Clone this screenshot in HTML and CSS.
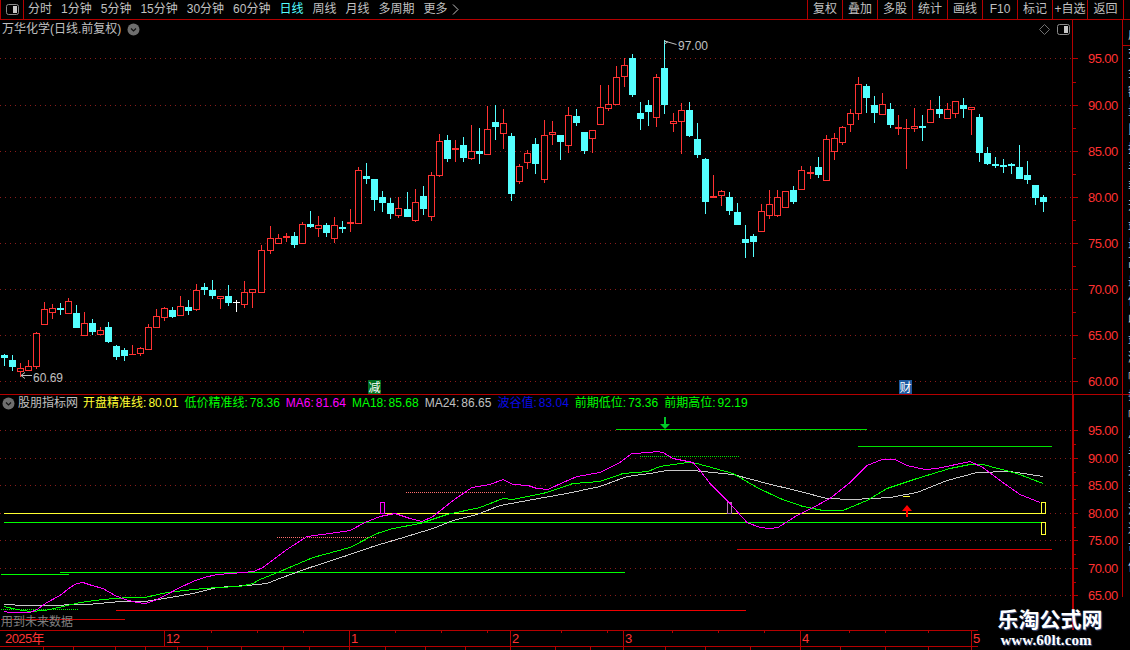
FILE: index.html
```html
<html>
  <head>
    <title>万华化学 日线</title>
    <link rel="stylesheet" href="styles.css">
  </head>
  <body>
    <div class="page">
      <div class="toolbar">
        <div class="side-toggle">
          <svg class="toggle-icon" width="13" height="11" viewBox="0 0 13 11"><rect x="0.5" y="0.5" width="12" height="10" rx="2" fill="none" stroke="#8c8c8c"/><rect x="7" y="2" width="4" height="7" fill="#c8c8c8"/></svg>
        </div>
        <div class="periods">
          <span>分时</span>
          <span>1分钟</span>
          <span>5分钟</span>
          <span>15分钟</span>
          <span>30分钟</span>
          <span>60分钟</span>
          <span class="active">日线</span>
          <span>周线</span>
          <span>月线</span>
          <span>多周期</span>
          <span class="more">更多<svg width="7" height="11" viewBox="0 0 7 11"><path d="M1 0.5l5 5-5 5" fill="none" stroke="#c0c0c0"/></svg></span>
        </div>
        <div class="actions">
          <span>复权</span>
          <span>叠加</span>
          <span>多股</span>
          <span>统计</span>
          <span>画线</span>
          <span>F10</span>
          <span>标记</span>
          <span>+自选</span>
          <span class="last">返回</span>
        </div>
      </div>

      <div class="main-panel">
        <svg id="main-chart" class="chart" width="1130" height="375" viewBox="0 20 1130 375"></svg>
        <div class="panel-title">
          <span>万华化学(日线.前复权)</span>
          <svg class="round-icon" width="13" height="13" viewBox="0 0 13 13"><circle cx="6.5" cy="6.5" r="6" fill="#6e6e6e"/><path d="M4 5.5l2.5 2.5 2.5-2.5" fill="none" stroke="#101010" stroke-width="1.2"/></svg>
        </div>
        <div class="panel-tools">
          <svg width="11" height="11" viewBox="0 0 11 11"><path d="M5.5 0.5l5 5-5 5-5-5z" fill="none" stroke="#707070"/></svg>
          <svg width="13" height="11" viewBox="0 0 13 11"><rect x="0.5" y="0.5" width="12" height="10" rx="2" fill="none" stroke="#8c8c8c"/><rect x="7" y="2" width="4" height="7" fill="#c8c8c8"/></svg>
        </div>
      </div>

      <div class="sub-panel">
        <svg id="sub-chart" class="chart" width="1130" height="235" viewBox="0 395 1130 235"></svg>
        <div class="legend">
          <svg class="round-icon" width="13" height="13" viewBox="0 0 13 13"><circle cx="6.5" cy="6.5" r="6" fill="#6e6e6e"/><path d="M4 5.5l2.5 2.5 2.5-2.5" fill="none" stroke="#101010" stroke-width="1.2"/></svg>
          <span class="grey legend-name">股朋指标网</span>
          <span class="yellow">开盘精准线: 80.01</span>
          <span class="green">低价精准线: 78.36</span>
          <span class="magenta">MA6: 81.64</span>
          <span class="green">MA18: 85.68</span>
          <span class="grey">MA24: 86.65</span>
          <span class="blue">波谷值: 83.04</span>
          <span class="green">前期低位: 73.36</span>
          <span class="green">前期高位: 92.19</span>
        </div>
        <div class="future-note">用到未来数据</div>
      </div>

      <div class="time-axis">
        <svg id="time-chart" width="985" height="20" viewBox="0 630 985 20"></svg>
      </div>

      <div class="side-strip">成交金额量比换手率开盘最高最低收盘涨幅振幅总手现手流通市值</div>

      <div class="watermark">
        <div class="watermark-name">乐淘公式网</div>
        <div class="watermark-url">www.60lt.com</div>
      </div>
    </div>
    <script src="chart.js"></script>
  </body>
</html>
```

FILE: styles.css
```css
* {
  box-sizing: border-box;
}

html,
body {
  margin: 0;
  background: #000;
}

.page {
  position: relative;
  width: 1130px;
  height: 650px;
  display: flex;
  flex-direction: column;
  overflow: hidden;
  background: #000;
  color: #c0c0c0;
  font: 12px/16px "Liberation Sans", "Noto Sans CJK SC", sans-serif;
}

/* toolbar */
.toolbar {
  display: flex;
  height: 20px;
  flex: none;
  border-bottom: 1px solid #b40000;
}

.side-toggle {
  width: 24px;
  display: flex;
  align-items: center;
  justify-content: center;
  border-left: 1px solid #b40000;
  border-right: 1px solid #b40000;
}

.periods {
  display: flex;
  gap: 9px;
  margin-left: 4px;
  line-height: 19px;
  white-space: pre;
}

.periods .active {
  color: #54ffff;
}

.more {
  display: flex;
  align-items: center;
  gap: 4px;
}

.actions {
  display: flex;
  margin-left: auto;
  margin-right: 6px;
  line-height: 19px;
}

.actions span {
  width: 35px;
  text-align: center;
  border-left: 1px solid #b40000;
}

.actions .last {
  width: 37px;
  border-right: 1px solid #b40000;
}

/* panels */
.main-panel {
  position: relative;
  height: 375px;
  flex: none;
}

.sub-panel {
  position: relative;
  height: 235px;
  flex: none;
}

.chart {
  display: block;
}

.panel-title {
  position: absolute;
  top: 1px;
  left: 2px;
  display: flex;
  align-items: center;
  gap: 6px;
}

.panel-tools {
  position: absolute;
  top: 4px;
  left: 1039px;
  display: flex;
  gap: 7px;
}

.legend {
  position: absolute;
  top: 0;
  left: 2px;
  display: flex;
  align-items: center;
  gap: 6px;
  white-space: nowrap;
  word-spacing: -1.3px;
}

.legend .round-icon {
  margin-right: -3px;
}

.legend-name {
  margin-right: -1px;
}

.grey {
  color: #c0c0c0;
}

.yellow {
  color: #ffff32;
}

.green {
  color: #00ff00;
}

.magenta {
  color: #ff00ff;
}

.blue {
  color: #0a0ae6;
}

.future-note {
  position: absolute;
  top: 219px;
  left: 1px;
  color: #808080;
}

/* chart drawing */
.chart line,
.chart rect,
.chart polyline,
#time-chart line {
  shape-rendering: crispEdges;
}

.grid-line {
  stroke: #8a1c1c;
  stroke-dasharray: 1 4;
}

.axis-line,
.axis-tick {
  stroke: #b40000;
}

.axis-thick {
  stroke: #b40000;
  stroke-width: 2;
}

.axis-label {
  fill: #ff3232;
  font-size: 13px;
  letter-spacing: -0.6px;
}

.mark-label {
  fill: #c0c0c0;
  font-size: 12px;
}

.mark-arrow {
  fill: none;
  stroke: #c0c0c0;
}

.candle-up {
  fill: #000;
  stroke: #ff3232;
}

.candle-down {
  fill: #54ffff;
}

.wick-up {
  stroke: #ff3232;
}

.wick-down {
  stroke: #54ffff;
}

.wick-flat {
  stroke: #fff;
}

.tag-cut {
  fill: #006e1e;
}

.tag-cash {
  fill: #1e5aa0;
}

.tag-text {
  fill: #fff;
  font-size: 12px;
}

.ma-line {
  fill: none;
}

.level {
  fill: none;
}

.time-label {
  fill: #ff3232;
  font-size: 13px;
  letter-spacing: -0.6px;
}

/* right hand strip, cut off by the window */
.side-strip {
  position: absolute;
  top: 20px;
  left: 1122px;
  width: 8px;
  height: 577px;
  padding-top: 6px;
  padding-left: 5px;
  overflow: hidden;
  border-left: 1px solid #b40000;
  font-size: 12px;
  line-height: 19px;
  word-break: break-all;
  color: #c8c8c8;
}

.time-axis {
  height: 20px;
  flex: none;
}

.watermark {
  position: absolute;
  top: 608px;
  left: 990px;
  width: 120px;
  text-align: center;
  color: #fff;
  font-weight: bold;
  text-shadow: 1px 1px 1px #3c4a78;
}

.watermark-name {
  font-size: 21px;
  line-height: 24px;
}

.watermark-url {
  padding-right: 8px;
  font-family: "Liberation Serif", serif;
  font-size: 15px;
  line-height: 16px;
  letter-spacing: 0.1px;
}
```

FILE: chart.js
```js
const svgNs = "http://www.w3.org/2000/svg";

function add(parent, tag, attrs, text) {
  const el = document.createElementNS(svgNs, tag);
  for (const key in attrs) {
    el.setAttribute(key, attrs[key]);
  }
  if (text) {
    el.textContent = text;
  }
  parent.appendChild(el);
  return el;
}

function hline(parent, y, x1, x2, cls) {
  return add(parent, "line", { x1: x1, x2: x2, y1: y + 0.5, y2: y + 0.5, class: cls });
}

function vline(parent, x, y1, y2, cls) {
  return add(parent, "line", { x1: x + 0.5, x2: x + 0.5, y1: y1, y2: y2, class: cls });
}

// body top, body bottom, high, low, kind (r up, c down, w doji) in page pixels
const candles = [
  [355, 358, 354, 366, "c"], [360, 367, 355, 371, "c"], [368, 372, 363, 377, "r"], [366, 371, 360, 371, "r"],
  [333, 367, 332, 369, "r"], [309, 325, 302, 325, "r"], [308, 313, 304, 319, "r"], [308, 310, 303, 315, "c"],
  [301, 314, 298, 314, "r"], [313, 328, 305, 328, "c"], [323, 336, 312, 336, "r"], [323, 332, 319, 335, "c"],
  [330, 335, 327, 335, "r"], [327, 342, 322, 343, "c"], [346, 357, 345, 360, "c"], [350, 356, 348, 361, "c"],
  [354, 355, 345, 355, "r"], [348, 354, 347, 356, "r"], [327, 350, 324, 350, "r"], [316, 328, 309, 328, "r"],
  [308, 318, 307, 321, "r"], [310, 317, 307, 318, "c"], [306, 316, 296, 316, "r"], [307, 311, 300, 315, "c"],
  [290, 310, 284, 311, "r"], [287, 290, 283, 295, "c"], [290, 296, 280, 299, "c"], [296, 299, 296, 309, "r"],
  [296, 303, 285, 306, "c"], [302, 303, 300, 312, "w"], [292, 305, 281, 308, "r"], [289, 293, 289, 308, "r"],
  [250, 293, 245, 293, "r"], [238, 251, 226, 254, "r"], [238, 244, 234, 244, "r"], [236, 238, 233, 242, "r"],
  [236, 245, 232, 248, "c"], [224, 244, 222, 244, "r"], [224, 227, 211, 228, "c"], [225, 229, 216, 237, "r"],
  [225, 233, 223, 237, "c"], [225, 239, 217, 243, "r"], [227, 228, 221, 233, "c"], [222, 224, 209, 232, "r"],
  [170, 224, 167, 224, "r"], [176, 179, 163, 184, "c"], [179, 200, 179, 211, "c"], [197, 203, 191, 212, "c"],
  [203, 214, 198, 219, "c"], [208, 216, 197, 218, "r"], [209, 217, 192, 217, "c"], [202, 221, 189, 222, "r"],
  [196, 209, 186, 215, "c"], [175, 217, 172, 221, "r"], [141, 176, 134, 177, "r"], [140, 159, 135, 162, "c"],
  [148, 150, 140, 162, "r"], [145, 158, 137, 162, "c"], [151, 159, 125, 160, "r"], [151, 154, 128, 164, "c"],
  [129, 155, 106, 155, "r"], [122, 127, 105, 140, "c"], [123, 134, 109, 149, "r"], [136, 194, 133, 201, "c"],
  [166, 182, 164, 184, "r"], [153, 163, 150, 169, "r"], [144, 164, 138, 174, "c"], [135, 180, 120, 183, "r"],
  [132, 135, 121, 145, "r"], [135, 142, 135, 160, "c"], [115, 146, 107, 153, "r"], [116, 123, 109, 126, "c"],
  [132, 151, 132, 154, "c"], [130, 139, 130, 153, "r"], [107, 125, 85, 125, "r"], [104, 109, 85, 111, "r"],
  [77, 105, 66, 105, "r"], [65, 77, 58, 87, "r"], [58, 95, 54, 97, "c"], [113, 119, 102, 130, "c"],
  [105, 112, 100, 126, "c"], [77, 118, 74, 127, "r"], [68, 105, 40, 114, "c"], [121, 124, 113, 132, "r"],
  [110, 122, 103, 154, "r"], [110, 136, 102, 137, "c"], [139, 155, 123, 158, "c"], [159, 202, 158, 214, "c"],
  [196, 198, 175, 198, "r"], [191, 196, 190, 206, "r"], [197, 211, 192, 215, "c"], [212, 225, 203, 225, "c"],
  [239, 243, 225, 258, "c"], [236, 242, 234, 257, "c"], [211, 232, 204, 232, "r"], [204, 216, 190, 219, "r"],
  [197, 216, 190, 217, "r"], [191, 208, 191, 208, "r"], [190, 202, 186, 204, "c"], [170, 190, 166, 190, "r"],
  [172, 174, 166, 179, "r"], [167, 175, 157, 178, "c"], [139, 181, 135, 181, "r"], [138, 152, 133, 160, "r"],
  [127, 143, 126, 145, "r"], [113, 125, 109, 132, "r"], [84, 114, 77, 120, "r"], [86, 98, 84, 113, "c"],
  [105, 113, 96, 123, "c"], [104, 115, 93, 115, "r"], [109, 125, 103, 128, "c"], [127, 129, 115, 135, "r"],
  [128, 129, 119, 169, "r"], [126, 129, 108, 132, "r"], [126, 127, 115, 141, "c"], [109, 123, 100, 123, "r"],
  [109, 114, 96, 118, "c"], [109, 119, 103, 119, "r"], [101, 114, 101, 118, "r"], [105, 109, 98, 118, "c"],
  [107, 110, 107, 135, "r"], [117, 153, 114, 162, "c"], [153, 164, 147, 165, "c"], [164, 165, 157, 168, "c"],
  [165, 167, 159, 173, "c"], [164, 166, 163, 174, "c"], [167, 179, 145, 179, "c"], [175, 180, 161, 184, "c"],
  [185, 198, 185, 205, "c"], [197, 202, 195, 212, "c"]
];

// the bars are not on a whole pixel pitch, these are the bars that step one further
const extraStep = [32, 33, 50, 67, 83, 100, 116];

function candleX(i) {
  return 4 + 8 * i + extraStep.filter(function (s) { return i >= s; }).length;
}

function drawAxis(svg, labels, thick) {
  labels.forEach(function (l) {
    hline(svg, l.y, 0, 1072, "grid-line");
    hline(svg, l.y, 1072, 1078, "axis-tick");
    hline(svg, l.y + l.half, 1072, 1076, "axis-tick");
    add(svg, "text", { x: 1088, y: l.y + 5, class: "axis-label" }, l.text);
  });
  if (thick) {
    add(svg, "line", { x1: 1073, x2: 1073, y1: 395, y2: 630, class: "axis-thick" });
  } else {
    vline(svg, 1072, 20, 395, "axis-line");
  }
}

function drawCandles(svg) {
  candles.forEach(function (c, i) {
    const x = candleX(i);
    const top = c[0], bottom = c[1], high = c[2], low = c[3], kind = c[4];
    if (kind === "w") {
      vline(svg, x, high, low, "wick-flat");
      hline(svg, top, x - 3, x + 4, "wick-flat");
    } else if (kind === "c") {
      vline(svg, x, high, low, "wick-down");
      add(svg, "rect", { x: x - 3, y: top, width: 7, height: Math.max(bottom - top, 2), class: "candle-down" });
    } else {
      vline(svg, x, high, top, "wick-up");
      vline(svg, x, bottom, low, "wick-up");
      if (bottom - top < 3) {
        add(svg, "rect", { x: x - 3, y: top, width: 7, height: Math.max(bottom - top, 1), fill: "#ff3232" });
      } else {
        add(svg, "rect", { x: x - 2.5, y: top + 0.5, width: 6, height: bottom - top - 1, class: "candle-up" });
      }
    }
  });
}

function drawMarks(svg) {
  // low and high notes
  add(svg, "path", { d: "M32 375.5H21M25 372.5l-4 3 4 3", class: "mark-arrow" });
  add(svg, "text", { x: 33, y: 382, class: "mark-label" }, "60.69");
  add(svg, "path", { d: "M664.5 41l12 3.5M664.5 41l3 1M664.5 44l3-2", class: "mark-arrow" });
  add(svg, "text", { x: 678, y: 50, class: "mark-label" }, "97.00");
  // news tags sitting on the bottom of the panel
  add(svg, "rect", { x: 368, y: 380, width: 13, height: 14, class: "tag-cut" });
  add(svg, "text", { x: 368.5, y: 392, class: "tag-text" }, "减");
  add(svg, "rect", { x: 899, y: 380, width: 13, height: 14, class: "tag-cash" });
  add(svg, "text", { x: 899.5, y: 392, class: "tag-text" }, "财");
}

const magenta = [
  [4, 611], [10, 612], [30, 612], [37, 609], [47, 602], [60, 595], [70, 587], [77, 583], [83, 582], [92, 585],
  [103, 588], [115, 595], [125, 599], [137, 602], [145, 603], [155, 600], [167, 594], [180, 587], [193, 581],
  [204, 577], [217, 574], [232, 573], [254, 571], [263, 567], [275, 558], [287, 549], [307, 536], [330, 533],
  [350, 530], [365, 522], [380, 516], [395, 513], [410, 518], [422, 521], [433, 516], [453, 500], [472, 487],
  [490, 484], [503, 479], [513, 484], [528, 485], [537, 488], [548, 489], [563, 482], [577, 476], [600, 472],
  [620, 462], [632, 453], [650, 452], [657, 451], [663, 452], [673, 458], [693, 462], [700, 470], [710, 483],
  [720, 493], [730, 503], [747, 522], [760, 527], [770, 528], [778, 527], [797, 515], [813, 507], [830, 498],
  [850, 482], [867, 465], [882, 459], [895, 459], [907, 465], [925, 469], [937, 468], [970, 461], [983, 467],
  [1000, 480], [1020, 494], [1040, 502]
];

const ma18 = [
  [4, 606], [17, 609], [30, 611], [45, 610], [63, 606], [80, 602], [103, 599], [128, 597], [145, 597], [167, 592],
  [193, 589], [217, 587], [240, 586], [253, 583], [260, 579], [280, 571], [313, 557], [350, 547], [377, 533],
  [393, 528], [420, 523], [447, 514], [480, 507], [503, 498], [513, 499], [547, 492], [573, 483], [600, 481],
  [623, 473], [648, 471], [660, 466], [687, 462], [697, 463], [733, 473], [757, 487], [780, 498], [803, 506],
  [823, 510], [843, 510], [867, 500], [887, 488], [917, 478], [950, 468], [970, 464], [983, 464], [1017, 473],
  [1043, 483]
];

const ma24 = [
  [4, 604], [25, 605], [40, 605], [88, 604], [120, 601], [145, 601], [170, 597], [193, 593], [217, 587], [247, 585],
  [267, 583], [277, 579], [307, 568], [347, 555], [373, 546], [400, 538], [433, 528], [453, 520], [477, 514],
  [500, 505], [533, 499], [567, 493], [600, 486], [627, 476], [650, 473], [667, 470], [693, 470], [733, 474],
  [767, 483], [800, 491], [827, 498], [853, 499], [890, 497], [917, 492], [947, 480], [977, 472], [1010, 471],
  [1043, 476]
];

// y, x1, x2, colour, dotted
const levels = [
  [429, 616, 867, "#00e000"], [446, 858, 1052, "#00e000"], [456, 640, 739, "#00e000", true],
  [492, 406, 505, "#ff6e6e", true], [513, 4, 1046, "#ffff32"], [522, 4, 1046, "#00ff00"],
  [537, 277, 376, "#ff6e6e", true], [549, 737, 1052, "#d80000"], [572, 60, 625, "#00ff00"],
  [574, 1, 69, "#00ff00"], [609, 1, 78, "#00ff00", true], [610, 116, 746, "#f00000"],
  [619, 1, 125, "#d80000"], [496, 903, 910, "#ffff32"]
];

function drawIndicator(svg) {
  levels.forEach(function (l) {
    const line = hline(svg, l[0], l[1], l[2], "level");
    line.setAttribute("stroke", l[3]);
    if (l[4]) {
      line.setAttribute("stroke-dasharray", "1 1");
    }
  });

  // boxes on the last bar and on the two pivots
  [[380, 502, 513, "#ff00ff"], [727, 502, 513, "#b478b4"], [1041, 502, 513, "#ffff32"], [1041, 522, 534, "#ffff32"]].forEach(function (b) {
    add(svg, "rect", { x: b[0] + 0.5, y: b[1] + 0.5, width: 4, height: b[2] - b[1], fill: "none", stroke: b[3] });
  });

  [[ma24, "#c8c8c8"], [ma18, "#00ff00"], [magenta, "#ff00ff"]].forEach(function (m) {
    add(svg, "polyline", {
      points: m[0].map(function (p) { return p[0] + "," + (p[1] + 0.5); }).join(" "),
      class: "ma-line",
      stroke: m[1]
    });
  });

  // up and down arrows
  add(svg, "path", { d: "M902 511h10l-5-6zM906 511h2v6h-2z", fill: "#ff0000" });
  add(svg, "path", { d: "M660 424h10l-5 5zM664 417h2v7h-2z", fill: "#00c828" });
}

function drawTime(svg) {
  hline(svg, 630, 0, 978, "axis-tick");
  hline(svg, 646, 0, 978, "axis-tick");
  const months = [["12", 164], ["1", 349], ["2", 510], ["3", 623], ["4", 800], ["5", 971]];
  add(svg, "text", { x: 5, y: 643, class: "time-label" }, "2025年");
  months.forEach(function (m) {
    vline(svg, m[1], 630, 646, "axis-tick");
    add(svg, "text", { x: m[1] + 2, y: 643, class: "time-label" }, m[0]);
  });
  [211, 257, 303, 395, 441, 487, 561, 607, 672, 718, 764, 849, 885, 928].forEach(function (x) {
    vline(svg, x, 630, 633, "axis-tick");
  });
  [43, 73, 115, 145, 177, 207, 241, 283, 309, 349, 385, 425, 465, 510, 555, 590, 623, 665, 705, 750, 800, 840, 885, 928, 971].forEach(function (x) {
    vline(svg, x, 646, 650, "axis-tick");
  });
}

const mainSvg = document.getElementById("main-chart");
const subSvg = document.getElementById("sub-chart");

drawAxis(mainSvg, [
  { y: 58, half: 24, text: "95.00" }, { y: 105, half: 23, text: "90.00" }, { y: 151, half: 23, text: "85.00" },
  { y: 197, half: 23, text: "80.00" }, { y: 243, half: 23, text: "75.00" }, { y: 289, half: 23, text: "70.00" },
  { y: 335, half: 23, text: "65.00" }, { y: 381, half: 0, text: "60.00" }
], false);
hline(mainSvg, 394, 0, 1130, "axis-line");
hline(mainSvg, 45, 1122, 1130, "axis-line");
drawCandles(mainSvg);
drawMarks(mainSvg);

drawAxis(subSvg, [
  { y: 430, half: 14, text: "95.00" }, { y: 458, half: 14, text: "90.00" }, { y: 485, half: 14, text: "85.00" },
  { y: 513, half: 14, text: "80.00" }, { y: 540, half: 14, text: "75.00" }, { y: 568, half: 14, text: "70.00" },
  { y: 595, half: 0, text: "65.00" }
], true);
drawIndicator(subSvg);

drawTime(document.getElementById("time-chart"));
```
